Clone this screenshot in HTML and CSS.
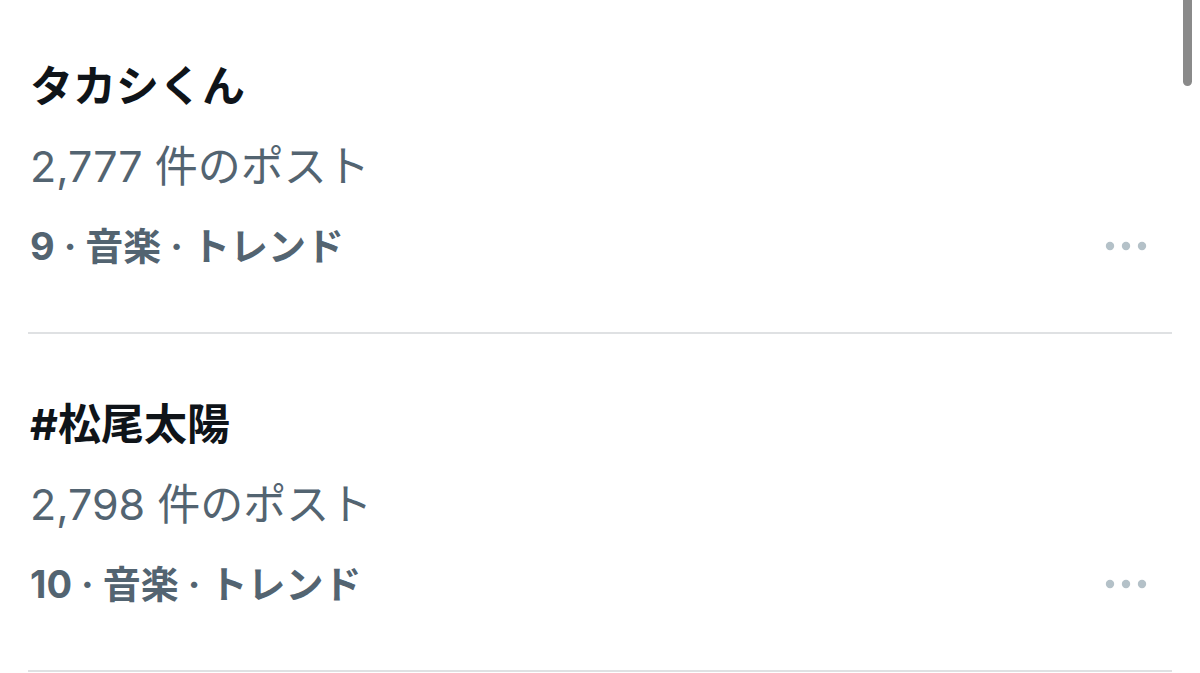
FILE: index.html
```html
<!DOCTYPE html>
<html lang="ja">
<head>
  <meta charset="UTF-8" />
  <meta name="viewport" content="width=device-width, initial-scale=1.0"/>
  <title>トレンド</title>
  <link rel="stylesheet" href="styles.css">
</head>
<body>

  <div class="scrollbar"></div>

  <div class="trend-list">
    <div class="trend">
      <div class="trend-name">タカシくん</div>
      <div class="trend-count">2,777 件のポスト</div>
      <div class="trend-meta">
        <span>9 · 音楽 · トレンド</span>
        <button class="more" aria-label="その他">
          <svg width="44" height="10" viewBox="0 0 44 10">
            <circle cx="6" cy="5" r="4.2"/>
            <circle cx="22" cy="5" r="4.2"/>
            <circle cx="38" cy="5" r="4.2"/>
          </svg>
        </button>
      </div>
    </div>

    <div class="trend">
      <div class="trend-name">#松尾太陽</div>
      <div class="trend-count">2,798 件のポスト</div>
      <div class="trend-meta">
        <span>10 · 音楽 · トレンド</span>
        <button class="more" aria-label="その他">
          <svg width="44" height="10" viewBox="0 0 44 10">
            <circle cx="6" cy="5" r="4.2"/>
            <circle cx="22" cy="5" r="4.2"/>
            <circle cx="38" cy="5" r="4.2"/>
          </svg>
        </button>
      </div>
    </div>
  </div>

</body>
</html>
```

FILE: styles.css
```css
body {
  font-family: Inter, "Noto Sans CJK JP", sans-serif;
  background-color: white;
  color: #0f1419;
  margin: 0;
  padding: 0;
  overflow: hidden;
}

.trend-list {
  margin-top: -4px;
  padding: 0 28px;
}

.trend {
  padding: 50px 0 22px 2px;
  border-bottom: 2px solid #dfe1e3;
}

.trend-name {
  font-size: 43px;
  font-weight: bold;
  line-height: 80px;
}

.trend-count {
  font-size: 43px;
  line-height: 80px;
  color: #536471;
}

.trend-meta {
  display: flex;
  justify-content: space-between;
  align-items: center;
  font-size: 38px;
  font-weight: bold;
  line-height: 80px;
  color: #536471;
  padding-bottom: 24px;
}

.more {
  background: transparent;
  border: none;
  padding: 0;
  margin-right: 24px;
  display: flex;
  fill: #b4c1c8;
}

.scrollbar {
  position: fixed;
  top: 0;
  right: 8px;
  width: 9px;
  height: 86px;
  background-color: #8a8a8a;
  border-radius: 0 0 5px 5px;
}
```
